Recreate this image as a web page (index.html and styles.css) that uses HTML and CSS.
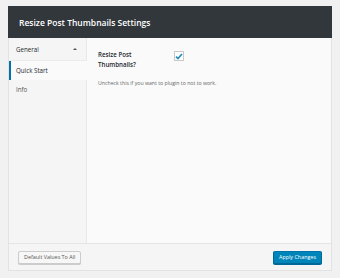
FILE: index.html
```html
<!DOCTYPE html>
<html lang="en">
<head>
	<meta charset="UTF-8">
	<title>Resize Post Thumbnails Settings</title>
	<link rel="stylesheet" href="styles.css">
</head>
<body>
	<div class="settingsPanel">
		<div class="panelHead">Resize Post Thumbnails Settings</div>
		<div class="panelBody">
			<ul class="sideNav">
				<li class="navGroup">General <span class="caret"></span></li>
				<li class="navItem active">Quick Start</li>
				<li class="navItem">Info</li>
			</ul>
			<div class="panelMain">
				<div class="fieldRow">
					<label class="fieldLabel">Resize Post Thumbnails?</label>
					<span class="checkBox">
						<svg width="8" height="7" viewBox="0 0 8 7"><path d="M1 3.6 L3 5.6 L7 1" fill="none" stroke="#1e8cbe" stroke-width="1.6"/></svg>
					</span>
				</div>
				<p class="fieldHelp">Uncheck this if you want to plugin to not to work.</p>
			</div>
		</div>
		<div class="panelFoot">
			<button class="btn">Default Values To All</button>
			<button class="btn btnPrimary">Apply Changes</button>
		</div>
	</div>
</body>
</html>
```

FILE: styles.css
```css
html,body,ul,p{margin:0px;padding:0px;}
ul{
	list-style: none;
}
body{
	background-color: #f1f1f1;
	font-family: "Open Sans", "Noto Sans", sans-serif;
	color: #23282d;
	padding: 6px 8px 0 8px;
}
.settingsPanel{
	width: 324px;
	height: 265px;
	box-sizing: border-box;
	border: 1px solid #e2e2e2;
	background-color: #fafafa;
	display: flex;
	flex-direction: column;
}
.panelHead{
	height: 32px;
	margin: -1px -1px 0 -1px;
	background-color: #32373c;
	color: #fff;
	font-size: 8.5px;
	font-weight: 600;
	display: flex;
	align-items: center;
	padding-left: 11px;
}
.panelBody{
	flex: 1;
	display: flex;
}
.sideNav{
	width: 77px;
	background-color: #f5f5f5;
	border-right: 1px solid #e8e8e8;
	font-size: 6.2px;
}
.navGroup{
	height: 22px;
	padding: 0 7px;
	display: flex;
	align-items: center;
	justify-content: space-between;
	border-bottom: 1px solid #ececec;
}
.caret{
	width: 0;
	height: 0;
	border-left: 2px solid transparent;
	border-right: 2px solid transparent;
	border-bottom: 2px solid #555;
	margin-right: 2px;
}
.navItem{
	height: 19px;
	padding: 0 7px;
	display: flex;
	align-items: center;
	color: #555;
}
.navItem.active{
	background-color: #fafafa;
	border-left: 2px solid #0073aa;
	padding-left: 5px;
	color: #23282d;
	margin-right: -1px;
}
.panelMain{
	flex: 1;
	padding: 12px 11px;
}
.fieldRow{
	display: flex;
	align-items: flex-start;
}
.fieldLabel{
	width: 76px;
	box-sizing: border-box;
	padding-right: 34px;
	font-size: 6.2px;
	font-weight: 600;
	line-height: 10px;
	color: #23282d;
}
.checkBox{
	width: 8px;
	height: 8px;
	border: 1px solid #c8c8c8;
	background-color: #fff;
	display: flex;
	align-items: center;
	justify-content: center;
	margin-top: 1px;
}
.fieldHelp{
	margin-top: 9px;
	font-size: 5.2px;
	color: #666;
}
.panelFoot{
	height: 27px;
	box-sizing: border-box;
	border-top: 1px solid #e5e5e5;
	background-color: #f5f5f5;
	display: flex;
	align-items: center;
	justify-content: space-between;
	padding: 0 9px;
}
.btn{
	height: 13px;
	padding: 0 5px;
	border: 1px solid #ccc;
	border-radius: 2px;
	background-color: #f7f7f7;
	color: #555;
	font-family: "Open Sans", "Noto Sans", sans-serif;
	font-size: 5.4px;
	box-shadow: 0 1px 0 #ccc;
}
.btnPrimary{
	background-color: #0085ba;
	border-color: #0073aa #006799 #006799;
	color: #fff;
	box-shadow: 0 1px 0 #006799;
}
```
